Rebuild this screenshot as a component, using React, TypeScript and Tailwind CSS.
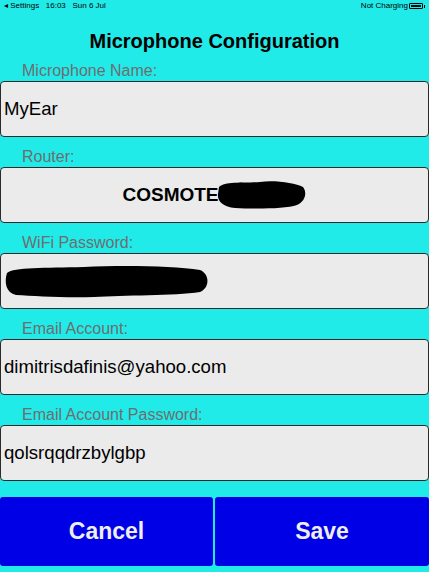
import React from "react";

const font = { fontFamily: '"Liberation Sans", Arial, sans-serif' };

function Field({ label, children, center }: { label: string; children: React.ReactNode; center?: boolean }) {
  return (
    <div className="flex flex-col">
      <div className="h-[30px] flex items-end pl-[22px] pb-[2px] text-[16px] leading-none text-[#6e6e6e]">{label}</div>
      <div
        className={`h-[56px] bg-[#ebebeb] border border-[#2a2a2a] rounded-[4px] flex items-center ${center ? "justify-center" : "pl-[3px]"} text-[18.6px] text-black`}
      >
        {children}
      </div>
    </div>
  );
}

export default function App() {
  return (
    <div className="w-[429px] h-[572px] bg-[#21ebe9] flex flex-col overflow-hidden" style={font}>
      <div className="h-[12px] flex items-center justify-between px-[4px] text-[8px] leading-none text-black">
        <span>◂ Settings&nbsp;&nbsp;&nbsp;16:03&nbsp;&nbsp;&nbsp;Sun 6 Jul</span>
        <span className="flex items-center gap-[1px]">
          Not Charging
          <span className="inline-block w-[14px] h-[6px] border border-black rounded-[1px] p-[1px]">
            <span className="block w-full h-full bg-black" />
          </span>
          <span className="inline-block w-[1px] h-[3px] bg-black" />
        </span>
      </div>
      <div className="h-[39px] flex items-end justify-center pb-[0px]">
        <span className="text-[20px] font-bold text-black leading-none">Microphone Configuration</span>
      </div>
      <Field label="Microphone Name:">MyEar</Field>
      <Field label="Router:" center>
        <span className="flex items-center font-bold text-[19px]">
          COSMOTE
          <svg width="92" height="30" viewBox="0 0 92 30" className="-ml-[4px]">
            <path d="M4 7 C 10 1, 30 3, 45 2 C 60 0, 80 3, 88 7 C 92 12, 91 21, 82 25 C 70 29, 40 29, 20 28 C 8 27, 2 21, 3 14 Z" fill="#000" />
          </svg>
        </span>
      </Field>
      <Field label="WiFi Password:">
        <svg width="206" height="34" viewBox="0 0 206 34">
          <path d="M3 9 C 10 3, 40 4, 80 3 C 120 1, 170 2, 196 6 C 206 10, 206 24, 196 28 C 170 32, 120 31, 90 33 C 60 34, 30 32, 12 31 C 2 29, 0 18, 3 9 Z" fill="#000" />
        </svg>
      </Field>
      <Field label="Email Account:">dimitrisdafinis@yahoo.com</Field>
      <Field label="Email Account Password:">qolsrqqdrzbylgbp</Field>
      <div className="flex gap-[2px] mt-[16px]">
        <button className="w-[213px] h-[69px] bg-[#0000e6] rounded-[3px] text-[23px] font-bold text-[#eeeeee]">Cancel</button>
        <button className="flex-1 h-[69px] bg-[#0000e6] rounded-[3px] text-[23px] font-bold text-[#eeeeee]">Save</button>
      </div>
    </div>
  );
}
